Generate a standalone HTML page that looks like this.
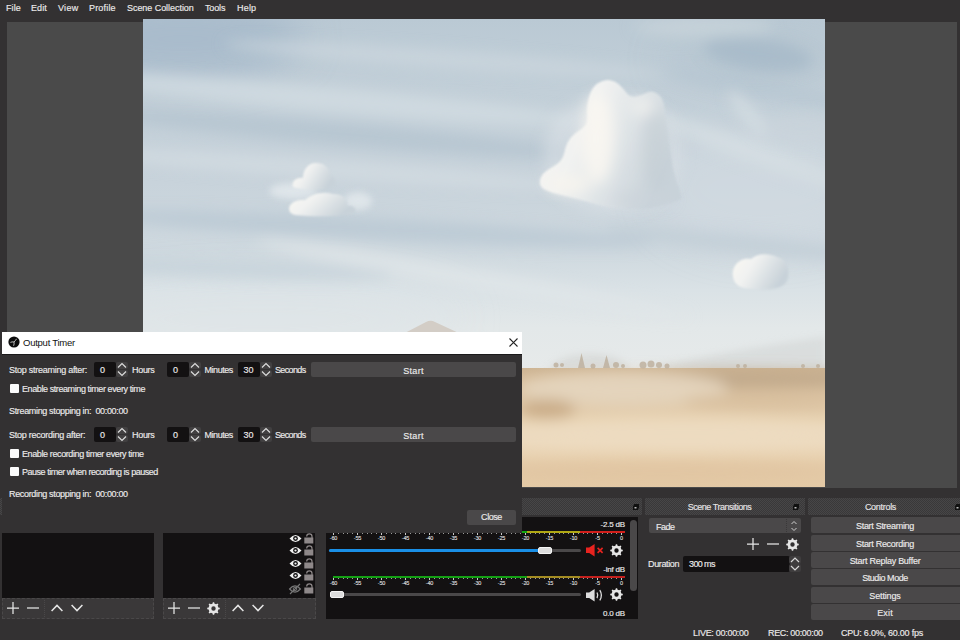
<!DOCTYPE html>
<html><head><meta charset="utf-8">
<style>
*{box-sizing:border-box}
html,body{margin:0;padding:0}
body{width:960px;height:640px;position:relative;overflow:hidden;background:#333132;font-family:"Liberation Sans",sans-serif;font-size:9px;color:#ecebeb;-webkit-text-stroke-width:0.15px}
.a{position:absolute;white-space:nowrap;line-height:10px}
.box{position:absolute}
svg{position:absolute;overflow:visible}
.menu span{position:absolute;top:3px;line-height:10px}
.sky{position:absolute;left:143px;top:19px;width:682px;height:468px;overflow:hidden;background:linear-gradient(180deg,#aabdcc 0%,#bac9d5 18%,#c8d4dc 38%,#d3dce2 55%,#dfe5e8 66%,#e6e9e9 74%,#e6e9e9 100%)}
.title{position:absolute;top:498px;height:17px;padding-top:1px;background:conic-gradient(#474647 25%,#393839 0 50%,#474647 0 75%,#393839 0) 0 0/2px 2px;text-align:center;line-height:17px;color:#e6e4e5}
.list{position:absolute;background:#131112}
.tb{position:absolute;background:#3a3839;border:1px dashed #4a4849}
.btn{position:absolute;background:#4a4849;border-radius:2px;text-align:center;line-height:16px}
.inp{position:absolute;background:#131112;border-radius:2px}
.cb{position:absolute;width:9px;height:9px;background:#fbfbfb;border-radius:1px}
.lbl{}
.tk{position:absolute;font-size:5.5px;line-height:6px;color:#dcdcdc;transform:translateX(-50%);letter-spacing:-0.2px}
</style></head><body>
<div class="menu">
<span style="letter-spacing:0.09px;left:6px">File</span>
<span style="letter-spacing:0.06px;left:31px">Edit</span>
<span style="letter-spacing:0.28px;left:58px">View</span>
<span style="letter-spacing:0.18px;left:89px">Profile</span>
<span style="letter-spacing:-0.05px;left:127px">Scene Collection</span>
<span style="letter-spacing:-0.13px;left:205px">Tools</span>
<span style="letter-spacing:0.19px;left:237px">Help</span>
</div>
<div class="box" style="left:7px;top:22px;width:950px;height:466px;background:#4a4a4a"></div>
<svg width="682" height="468" style="left:143px;top:19px;overflow:hidden" viewBox="0 0 682 468">
<defs>
<linearGradient id="sk" x1="0" y1="0" x2="0" y2="1">
<stop offset="0" stop-color="#bac9d4"/>
<stop offset="0.15" stop-color="#c2cfd8"/>
<stop offset="0.35" stop-color="#c8d3db"/>
<stop offset="0.5" stop-color="#cfd9df"/>
<stop offset="0.58" stop-color="#dae2e6"/>
<stop offset="0.66" stop-color="#e3e8e9"/>
<stop offset="0.76" stop-color="#e7eaea"/>
<stop offset="1" stop-color="#e7eaea"/>
</linearGradient>
<linearGradient id="cl" x1="0" y1="0" x2="1" y2="0.4">
<stop offset="0" stop-color="#f9f7f2"/>
<stop offset="0.4" stop-color="#f1f2f1"/>
<stop offset="1" stop-color="#c8d2d9"/>
</linearGradient>
<linearGradient id="land" x1="0" y1="0" x2="0" y2="1">
<stop offset="0" stop-color="#cdb493"/>
<stop offset="0.12" stop-color="#d6bd9c"/>
<stop offset="0.3" stop-color="#e0c9a9"/>
<stop offset="0.45" stop-color="#e6d0ae"/>
<stop offset="0.62" stop-color="#ecd9bc"/>
<stop offset="0.8" stop-color="#e7cfad"/>
<stop offset="1" stop-color="#e4caa6"/>
</linearGradient>
<filter id="b20" filterUnits="userSpaceOnUse" x="-200" y="-200" width="1100" height="900"><feGaussianBlur stdDeviation="18"/></filter>
<filter id="b8" filterUnits="userSpaceOnUse" x="-200" y="-200" width="1100" height="900"><feGaussianBlur stdDeviation="7"/></filter>
<filter id="b4" filterUnits="userSpaceOnUse" x="-200" y="-200" width="1100" height="900"><feGaussianBlur stdDeviation="3.5"/></filter>
<filter id="b15" filterUnits="userSpaceOnUse" x="-200" y="-200" width="1100" height="900"><feGaussianBlur stdDeviation="1.3"/></filter>
<filter id="b07" filterUnits="userSpaceOnUse" x="-200" y="-200" width="1100" height="900"><feGaussianBlur stdDeviation="0.7"/></filter>
</defs>
<rect width="682" height="468" fill="url(#sk)"/>
<!-- broad tone -->
<g filter="url(#b20)">
<ellipse cx="40" cy="20" rx="120" ry="40" fill="#a3b7c8" opacity=".75"/>
<ellipse cx="610" cy="40" rx="90" ry="22" fill="#b0c1ce" opacity=".5"/>
<ellipse cx="620" cy="170" rx="110" ry="60" fill="#d3dce2" opacity=".6"/>
<ellipse cx="120" cy="300" rx="200" ry="40" fill="#dde4e8" opacity=".6"/>
</g>
<!-- streaks -->
<g filter="url(#b8)">
<ellipse cx="180" cy="80" rx="280" ry="12" transform="rotate(5 180 80)" fill="#d2dce2" opacity=".8"/>
<ellipse cx="200" cy="115" rx="260" ry="11" transform="rotate(5 200 115)" fill="#b3c3cf" opacity=".75"/>
<ellipse cx="180" cy="150" rx="260" ry="9" transform="rotate(4 180 150)" fill="#d3dce2" opacity=".8"/>
<ellipse cx="230" cy="210" rx="280" ry="11" transform="rotate(3 230 210)" fill="#b6c6d1" opacity=".7"/>
<ellipse cx="600" cy="225" rx="140" ry="9" transform="rotate(6 600 225)" fill="#bccad4" opacity=".6"/>
<ellipse cx="600" cy="130" rx="120" ry="10" transform="rotate(20 600 130)" fill="#d6dee3" opacity=".8"/>
<ellipse cx="620" cy="70" rx="100" ry="9" transform="rotate(10 620 70)" fill="#b4c4d0" opacity=".6"/>
<ellipse cx="330" cy="260" rx="220" ry="10" transform="rotate(10 330 260)" fill="#e0e6e9" opacity=".8"/>
<ellipse cx="90" cy="250" rx="160" ry="9" transform="rotate(2 90 250)" fill="#c3d0d9" opacity=".7"/>
<ellipse cx="300" cy="40" rx="220" ry="9" transform="rotate(4 300 40)" fill="#cdd7de" opacity=".7"/>
</g>
<g filter="url(#b8)">
<ellipse cx="615" cy="35" rx="55" ry="16" transform="rotate(8 615 35)" fill="#a6b9c8" opacity=".8"/>
<ellipse cx="560" cy="8" rx="70" ry="10" fill="#cbd5dc" opacity=".7"/>
<ellipse cx="605" cy="95" rx="30" ry="7" transform="rotate(50 605 95)" fill="#d6dee3" opacity=".8"/>
<ellipse cx="660" cy="110" rx="40" ry="15" fill="#c9d3da" opacity=".6"/>
</g>
<!-- big cloud -->
<g filter="url(#b8)"><ellipse cx="470" cy="135" rx="70" ry="60" fill="#dfe5e8" opacity=".45"/></g>
<path filter="url(#b15)" fill="url(#cl)" d="M455.2 63.9 Q461.6 60.3 467.1 61.2 Q472.6 62.1 476.3 65.8 Q480.0 69.4 483.6 74.0 Q487.2 78.6 492.6 77.7 Q498.0 76.8 503.5 74.0 Q509.0 71.3 514.5 74.9 Q520.0 78.6 521.0 86.8 Q522.0 95.0 523.8 107.8 Q525.6 120.6 528.3 138.8 Q531.0 157.0 535.6 168.0 Q540.2 179.0 537.5 180.8 Q534.7 182.7 516.5 187.3 Q498.2 191.9 479.9 190.1 Q461.6 188.2 447.0 183.6 Q432.4 179.0 416.9 175.4 Q401.3 171.8 398.6 168.2 Q395.8 164.5 397.6 159.0 Q399.5 153.5 409.6 148.0 Q419.6 142.5 421.4 133.4 Q423.2 124.3 427.8 118.8 Q432.4 113.3 438.8 109.7 Q445.2 106.0 444.2 96.8 Q443.3 87.7 446.1 77.7 Q448.8 67.6 455.2 63.9Z"/>
<g filter="url(#b8)">
<ellipse cx="455" cy="120" rx="16" ry="45" fill="#fbf8f1" opacity=".8"/>
<ellipse cx="425" cy="165" rx="22" ry="9" fill="#f8f5ee" opacity=".8"/>
<ellipse cx="512" cy="130" rx="12" ry="42" fill="#c3ccd4" opacity=".55"/>
<ellipse cx="500" cy="180" rx="30" ry="8" fill="#ccd4da" opacity=".6"/>
<ellipse cx="500" cy="88" rx="12" ry="9" fill="#f6f5f1" opacity=".6"/>
</g>
<!-- left clouds -->
<g filter="url(#b4)" fill="#e2e8ec" opacity=".85">
<ellipse cx="150" cy="172" rx="24" ry="8"/>
<ellipse cx="215" cy="182" rx="14" ry="9"/>
</g>
<path filter="url(#b15)" fill="url(#cl)" d="M150 168 C148 162,154 158,160 159 C160 150,166 143,174 144 C182 144,188 150,187 157 C192 158,194 164,190 168 C184 172,160 172,150 168Z"/>
<path filter="url(#b15)" fill="url(#cl)" d="M146 190 C146 184,154 180,162 181 C168 175,180 172,190 175 C198 174,206 180,204 187 C210 186,214 190,212 194 C200 198,170 198,152 196 C148 195,146 193,146 190Z"/>
<!-- right small cloud -->
<path filter="url(#b15)" fill="url(#cl)" d="M590 258 C588 246,598 238,608 240 C614 234,626 234,634 238 C644 240,648 252,644 262 C640 270,624 272,610 270 C598 270,591 266,590 258Z"/>
<!-- mountain peak -->
<path d="M258 316 L283 303 Q287.6 300.5 292 303 L320 316 Z" fill="#d3cdc6" filter="url(#b07)"/>
<!-- far hills -->
<g filter="url(#b4)">
<ellipse cx="447" cy="352" rx="40" ry="17" fill="#d8dad9" opacity=".9"/>
<path d="M500 352 Q560 335 682 318 L682 352Z" fill="#d8dbdb" opacity=".9"/>
</g>
<!-- land -->
<rect x="0" y="349" width="682" height="119" fill="url(#land)"/>
<g filter="url(#b8)">
<ellipse cx="590" cy="360" rx="150" ry="9" fill="#bea789" opacity=".85"/>
<ellipse cx="480" cy="370" rx="105" ry="17" fill="#e5d5be" opacity=".95"/>
<ellipse cx="405" cy="390" rx="28" ry="10" fill="#c3a37c" opacity=".75"/>
<ellipse cx="620" cy="382" rx="80" ry="8" fill="#d5bc9a" opacity=".7"/>
<ellipse cx="540" cy="414" rx="200" ry="15" fill="#eddbc1" opacity=".9"/>
<ellipse cx="520" cy="452" rx="200" ry="10" fill="#dcc09b" opacity=".55"/>
</g>
<!-- trees -->
<g fill="#bcae9b" filter="url(#b07)" opacity=".8">
<path d="M435 349 L438.5 334 L442 349Z"/>
<path d="M460 349 L463.5 336 L467 349Z"/>
<circle cx="413" cy="346" r="2.5"/><circle cx="419" cy="346" r="2"/>
<circle cx="450" cy="347" r="2.5"/><circle cx="473" cy="346" r="3"/><circle cx="480" cy="347" r="2"/>
<circle cx="500" cy="346" r="3.5"/><circle cx="508" cy="345" r="3.5"/><circle cx="516" cy="346" r="3"/><circle cx="524" cy="347" r="2.5"/>
<circle cx="595" cy="347" r="2"/><circle cx="602" cy="347" r="2"/><circle cx="660" cy="347" r="2"/><circle cx="675" cy="347" r="2"/>
</g>
</svg>
<div class="title" style="left:0;width:155px;padding-right:11px">Scenes</div>
<div class="title" style="left:163px;width:154px;padding-right:11px">Sources</div>
<div class="title" style="left:325px;width:317px;padding-right:11px">Audio Mixer</div>
<div class="title" style="letter-spacing:-0.47px;left:645px;width:160px;padding-right:11px">Scene Transitions</div>
<div class="title" style="letter-spacing:-0.29px;left:808px;width:152px;padding-right:7px">Controls</div>
<svg width="6" height="6" style="left:633px;top:504px"><rect x="1.5" y="0.5" width="4" height="3.5" fill="#111" stroke="#111" stroke-width="1"/><rect x="0.5" y="2" width="4" height="3.5" fill="#111" stroke="#111"/><rect x="1.5" y="3" width="2" height="1.5" fill="#bbb"/></svg>
<svg width="6" height="6" style="left:793px;top:504px"><rect x="1.5" y="0.5" width="4" height="3.5" fill="#111" stroke="#111" stroke-width="1"/><rect x="0.5" y="2" width="4" height="3.5" fill="#111" stroke="#111"/><rect x="1.5" y="3" width="2" height="1.5" fill="#bbb"/></svg>
<svg width="6" height="6" style="left:955px;top:504px"><rect x="1.5" y="0.5" width="4" height="3.5" fill="#111" stroke="#111" stroke-width="1"/><rect x="0.5" y="2" width="4" height="3.5" fill="#111" stroke="#111"/><rect x="1.5" y="3" width="2" height="1.5" fill="#bbb"/></svg>
<div class="list" style="left:2px;top:517px;width:152px;height:81px"></div>
<div class="tb" style="left:2px;top:598px;width:152px;height:21px"></div>
<div class="list" style="left:163px;top:517px;width:152px;height:81px"></div>
<div class="tb" style="left:163px;top:598px;width:153px;height:21px"></div>
<div class="list" style="left:326px;top:517px;width:312px;height:102px"></div>
<svg width="12" height="12" style="left:7px;top:602px"><path d="M6 0V12M0 6H12" stroke="#e6e6e6" stroke-width="1.25"/></svg>
<svg width="12" height="12" style="left:27px;top:602px"><path d="M0 6H12" stroke="#e6e6e6" stroke-width="1.25"/></svg>
<svg width="12" height="8" style="left:51px;top:604px"><path d="M0.6 7L6 1.4L11.4 7" fill="none" stroke="#e6e6e6" stroke-width="1.5"/></svg>
<svg width="12" height="8" style="left:71px;top:604px"><path d="M0.6 1L6 6.6L11.4 1" fill="none" stroke="#e6e6e6" stroke-width="1.5"/></svg>
<div class="box" style="left:44px;top:600px;width:1px;height:17px;border-left:1px dotted #4a4849"></div>
<svg width="12" height="12" style="left:168px;top:602px"><path d="M6 0V12M0 6H12" stroke="#e6e6e6" stroke-width="1.25"/></svg>
<svg width="12" height="12" style="left:188px;top:602px"><path d="M0 6H12" stroke="#e6e6e6" stroke-width="1.25"/></svg>
<svg width="13" height="13" style="left:207.0px;top:601.5px"><path fill-rule="evenodd" fill="#e6e6e6" d="M4.62 1.97 L5.43 1.72 L5.86 0.23 L7.14 0.23 L7.57 1.72 L8.38 1.97 L9.13 2.36 L10.48 1.61 L11.39 2.52 L10.64 3.87 L11.03 4.62 L11.28 5.43 L12.77 5.86 L12.77 7.14 L11.28 7.57 L11.03 8.38 L10.64 9.13 L11.39 10.48 L10.48 11.39 L9.13 10.64 L8.38 11.03 L7.57 11.28 L7.14 12.77 L5.86 12.77 L5.43 11.28 L4.62 11.03 L3.87 10.64 L2.52 11.39 L1.61 10.48 L2.36 9.13 L1.97 8.38 L1.72 7.57 L0.23 7.14 L0.23 5.86 L1.72 5.43 L1.97 4.62 L2.36 3.87 L1.61 2.52 L2.52 1.61 L3.87 2.36Z M8.7 6.5 A2.2 2.2 0 1 0 4.3 6.5 A2.2 2.2 0 1 0 8.7 6.5Z"/></svg>
<svg width="12" height="8" style="left:232px;top:604px"><path d="M0.6 7L6 1.4L11.4 7" fill="none" stroke="#e6e6e6" stroke-width="1.5"/></svg>
<svg width="12" height="8" style="left:251.5px;top:604px"><path d="M0.6 1L6 6.6L11.4 1" fill="none" stroke="#e6e6e6" stroke-width="1.5"/></svg>
<div class="box" style="left:225px;top:600px;width:1px;height:17px;border-left:1px dotted #4a4849"></div>
<svg width="13" height="9" style="left:288.5px;top:533.5px"><path d="M0.5 4.5Q6.5 -2.6 12.5 4.5Q6.5 11.6 0.5 4.5Z" fill="#f2f2f2"/><circle cx="6.5" cy="4.5" r="2.4" fill="#121112"/><circle cx="6.5" cy="4.5" r="1.1" fill="#f2f2f2"/></svg>
<svg width="10" height="12" style="left:303.8px;top:532.5px"><path d="M2.7 3.6A2.65 2.65 0 0 1 8 3.6V5" fill="none" stroke="#8e8889" stroke-width="1.2"/><rect x="0.3" y="4.5" width="9" height="6" fill="#8e8889"/></svg>
<svg width="13" height="9" style="left:288.5px;top:546.0px"><path d="M0.5 4.5Q6.5 -2.6 12.5 4.5Q6.5 11.6 0.5 4.5Z" fill="#f2f2f2"/><circle cx="6.5" cy="4.5" r="2.4" fill="#121112"/><circle cx="6.5" cy="4.5" r="1.1" fill="#f2f2f2"/></svg>
<svg width="10" height="12" style="left:303.8px;top:545.0px"><path d="M2.7 3.6A2.65 2.65 0 0 1 8 3.6V5" fill="none" stroke="#8e8889" stroke-width="1.2"/><rect x="0.3" y="4.5" width="9" height="6" fill="#8e8889"/></svg>
<svg width="13" height="9" style="left:288.5px;top:558.5px"><path d="M0.5 4.5Q6.5 -2.6 12.5 4.5Q6.5 11.6 0.5 4.5Z" fill="#f2f2f2"/><circle cx="6.5" cy="4.5" r="2.4" fill="#121112"/><circle cx="6.5" cy="4.5" r="1.1" fill="#f2f2f2"/></svg>
<svg width="10" height="12" style="left:303.8px;top:557.5px"><path d="M2.7 3.6A2.65 2.65 0 0 1 8 3.6V5" fill="none" stroke="#8e8889" stroke-width="1.2"/><rect x="0.3" y="4.5" width="9" height="6" fill="#8e8889"/></svg>
<svg width="13" height="9" style="left:288.5px;top:571.2px"><path d="M0.5 4.5Q6.5 -2.6 12.5 4.5Q6.5 11.6 0.5 4.5Z" fill="#f2f2f2"/><circle cx="6.5" cy="4.5" r="2.4" fill="#121112"/><circle cx="6.5" cy="4.5" r="1.1" fill="#f2f2f2"/></svg>
<svg width="10" height="12" style="left:303.8px;top:570.2px"><path d="M2.7 3.6A2.65 2.65 0 0 1 8 3.6V5" fill="none" stroke="#8e8889" stroke-width="1.2"/><rect x="0.3" y="4.5" width="9" height="6" fill="#8e8889"/></svg>
<svg width="12" height="10" style="left:289px;top:583.5px"><path d="M0.6 5Q6 -1.2 11.4 5Q6 11.2 0.6 5Z" fill="none" stroke="#777" stroke-width="1.2"/><circle cx="6" cy="5" r="1.8" fill="none" stroke="#777" stroke-width="1"/><path d="M1 10L11 0" stroke="#777" stroke-width="1.1"/></svg>
<svg width="10" height="12" style="left:303.8px;top:583.0px"><path d="M2.7 3.6A2.65 2.65 0 0 1 8 3.6V5" fill="none" stroke="#8e8889" stroke-width="1.2"/><rect x="0.3" y="4.5" width="9" height="6" fill="#8e8889"/></svg>
<div class="box" style="left:333px;top:531px;width:292px;height:2px;background:linear-gradient(90deg,#12a812 0,#12a812 194px,#b0a814 194px,#b0a814 247px,#d21f1c 247px)"></div><div class="box" style="left:333.0px;top:533px;width:1px;height:2px;background:#c8c8c8"></div><div class="box" style="left:337.8px;top:533px;width:1px;height:1px;background:#9a9a9a"></div><div class="box" style="left:342.6px;top:533px;width:1px;height:1px;background:#9a9a9a"></div><div class="box" style="left:347.4px;top:533px;width:1px;height:1px;background:#9a9a9a"></div><div class="box" style="left:352.2px;top:533px;width:1px;height:1px;background:#9a9a9a"></div><div class="box" style="left:357.0px;top:533px;width:1px;height:2px;background:#c8c8c8"></div><div class="box" style="left:361.8px;top:533px;width:1px;height:1px;background:#9a9a9a"></div><div class="box" style="left:366.6px;top:533px;width:1px;height:1px;background:#9a9a9a"></div><div class="box" style="left:371.4px;top:533px;width:1px;height:1px;background:#9a9a9a"></div><div class="box" style="left:376.2px;top:533px;width:1px;height:1px;background:#9a9a9a"></div><div class="box" style="left:381.0px;top:533px;width:1px;height:2px;background:#c8c8c8"></div><div class="box" style="left:385.8px;top:533px;width:1px;height:1px;background:#9a9a9a"></div><div class="box" style="left:390.6px;top:533px;width:1px;height:1px;background:#9a9a9a"></div><div class="box" style="left:395.4px;top:533px;width:1px;height:1px;background:#9a9a9a"></div><div class="box" style="left:400.2px;top:533px;width:1px;height:1px;background:#9a9a9a"></div><div class="box" style="left:405.0px;top:533px;width:1px;height:2px;background:#c8c8c8"></div><div class="box" style="left:409.8px;top:533px;width:1px;height:1px;background:#9a9a9a"></div><div class="box" style="left:414.6px;top:533px;width:1px;height:1px;background:#9a9a9a"></div><div class="box" style="left:419.4px;top:533px;width:1px;height:1px;background:#9a9a9a"></div><div class="box" style="left:424.2px;top:533px;width:1px;height:1px;background:#9a9a9a"></div><div class="box" style="left:429.0px;top:533px;width:1px;height:2px;background:#c8c8c8"></div><div class="box" style="left:433.8px;top:533px;width:1px;height:1px;background:#9a9a9a"></div><div class="box" style="left:438.6px;top:533px;width:1px;height:1px;background:#9a9a9a"></div><div class="box" style="left:443.4px;top:533px;width:1px;height:1px;background:#9a9a9a"></div><div class="box" style="left:448.2px;top:533px;width:1px;height:1px;background:#9a9a9a"></div><div class="box" style="left:453.0px;top:533px;width:1px;height:2px;background:#c8c8c8"></div><div class="box" style="left:457.8px;top:533px;width:1px;height:1px;background:#9a9a9a"></div><div class="box" style="left:462.6px;top:533px;width:1px;height:1px;background:#9a9a9a"></div><div class="box" style="left:467.4px;top:533px;width:1px;height:1px;background:#9a9a9a"></div><div class="box" style="left:472.2px;top:533px;width:1px;height:1px;background:#9a9a9a"></div><div class="box" style="left:477.0px;top:533px;width:1px;height:2px;background:#c8c8c8"></div><div class="box" style="left:481.8px;top:533px;width:1px;height:1px;background:#9a9a9a"></div><div class="box" style="left:486.6px;top:533px;width:1px;height:1px;background:#9a9a9a"></div><div class="box" style="left:491.4px;top:533px;width:1px;height:1px;background:#9a9a9a"></div><div class="box" style="left:496.2px;top:533px;width:1px;height:1px;background:#9a9a9a"></div><div class="box" style="left:501.0px;top:533px;width:1px;height:2px;background:#c8c8c8"></div><div class="box" style="left:505.8px;top:533px;width:1px;height:1px;background:#9a9a9a"></div><div class="box" style="left:510.6px;top:533px;width:1px;height:1px;background:#9a9a9a"></div><div class="box" style="left:515.4px;top:533px;width:1px;height:1px;background:#9a9a9a"></div><div class="box" style="left:520.2px;top:533px;width:1px;height:1px;background:#9a9a9a"></div><div class="box" style="left:525.0px;top:533px;width:1px;height:2px;background:#c8c8c8"></div><div class="box" style="left:529.8px;top:533px;width:1px;height:1px;background:#9a9a9a"></div><div class="box" style="left:534.6px;top:533px;width:1px;height:1px;background:#9a9a9a"></div><div class="box" style="left:539.4px;top:533px;width:1px;height:1px;background:#9a9a9a"></div><div class="box" style="left:544.2px;top:533px;width:1px;height:1px;background:#9a9a9a"></div><div class="box" style="left:549.0px;top:533px;width:1px;height:2px;background:#c8c8c8"></div><div class="box" style="left:553.8px;top:533px;width:1px;height:1px;background:#9a9a9a"></div><div class="box" style="left:558.6px;top:533px;width:1px;height:1px;background:#9a9a9a"></div><div class="box" style="left:563.4px;top:533px;width:1px;height:1px;background:#9a9a9a"></div><div class="box" style="left:568.2px;top:533px;width:1px;height:1px;background:#9a9a9a"></div><div class="box" style="left:573.0px;top:533px;width:1px;height:2px;background:#c8c8c8"></div><div class="box" style="left:577.8px;top:533px;width:1px;height:1px;background:#9a9a9a"></div><div class="box" style="left:582.6px;top:533px;width:1px;height:1px;background:#9a9a9a"></div><div class="box" style="left:587.4px;top:533px;width:1px;height:1px;background:#9a9a9a"></div><div class="box" style="left:592.2px;top:533px;width:1px;height:1px;background:#9a9a9a"></div><div class="box" style="left:597.0px;top:533px;width:1px;height:2px;background:#c8c8c8"></div><div class="box" style="left:601.8px;top:533px;width:1px;height:1px;background:#9a9a9a"></div><div class="box" style="left:606.6px;top:533px;width:1px;height:1px;background:#9a9a9a"></div><div class="box" style="left:611.4px;top:533px;width:1px;height:1px;background:#9a9a9a"></div><div class="box" style="left:616.2px;top:533px;width:1px;height:1px;background:#9a9a9a"></div><div class="box" style="left:621.0px;top:533px;width:1px;height:2px;background:#c8c8c8"></div><div class="tk" style="left:333.5px;top:535px">-60</div><div class="tk" style="left:357.5px;top:535px">-55</div><div class="tk" style="left:381.5px;top:535px">-50</div><div class="tk" style="left:405.5px;top:535px">-45</div><div class="tk" style="left:429.5px;top:535px">-40</div><div class="tk" style="left:453.5px;top:535px">-35</div><div class="tk" style="left:477.5px;top:535px">-30</div><div class="tk" style="left:501.5px;top:535px">-25</div><div class="tk" style="left:525.5px;top:535px">-20</div><div class="tk" style="left:549.5px;top:535px">-15</div><div class="tk" style="left:573.5px;top:535px">-10</div><div class="tk" style="left:597.5px;top:535px">-5</div><div class="tk" style="left:621.5px;top:535px">0</div>
<div class="box" style="left:333px;top:576px;width:292px;height:2px;background:linear-gradient(90deg,#14a014 0,#14a014 194px,#a48c22 194px,#a48c22 247px,#c4201d 247px)"></div><div class="box" style="left:333.0px;top:578px;width:1px;height:2px;background:#c8c8c8"></div><div class="box" style="left:337.8px;top:578px;width:1px;height:1px;background:#9a9a9a"></div><div class="box" style="left:342.6px;top:578px;width:1px;height:1px;background:#9a9a9a"></div><div class="box" style="left:347.4px;top:578px;width:1px;height:1px;background:#9a9a9a"></div><div class="box" style="left:352.2px;top:578px;width:1px;height:1px;background:#9a9a9a"></div><div class="box" style="left:357.0px;top:578px;width:1px;height:2px;background:#c8c8c8"></div><div class="box" style="left:361.8px;top:578px;width:1px;height:1px;background:#9a9a9a"></div><div class="box" style="left:366.6px;top:578px;width:1px;height:1px;background:#9a9a9a"></div><div class="box" style="left:371.4px;top:578px;width:1px;height:1px;background:#9a9a9a"></div><div class="box" style="left:376.2px;top:578px;width:1px;height:1px;background:#9a9a9a"></div><div class="box" style="left:381.0px;top:578px;width:1px;height:2px;background:#c8c8c8"></div><div class="box" style="left:385.8px;top:578px;width:1px;height:1px;background:#9a9a9a"></div><div class="box" style="left:390.6px;top:578px;width:1px;height:1px;background:#9a9a9a"></div><div class="box" style="left:395.4px;top:578px;width:1px;height:1px;background:#9a9a9a"></div><div class="box" style="left:400.2px;top:578px;width:1px;height:1px;background:#9a9a9a"></div><div class="box" style="left:405.0px;top:578px;width:1px;height:2px;background:#c8c8c8"></div><div class="box" style="left:409.8px;top:578px;width:1px;height:1px;background:#9a9a9a"></div><div class="box" style="left:414.6px;top:578px;width:1px;height:1px;background:#9a9a9a"></div><div class="box" style="left:419.4px;top:578px;width:1px;height:1px;background:#9a9a9a"></div><div class="box" style="left:424.2px;top:578px;width:1px;height:1px;background:#9a9a9a"></div><div class="box" style="left:429.0px;top:578px;width:1px;height:2px;background:#c8c8c8"></div><div class="box" style="left:433.8px;top:578px;width:1px;height:1px;background:#9a9a9a"></div><div class="box" style="left:438.6px;top:578px;width:1px;height:1px;background:#9a9a9a"></div><div class="box" style="left:443.4px;top:578px;width:1px;height:1px;background:#9a9a9a"></div><div class="box" style="left:448.2px;top:578px;width:1px;height:1px;background:#9a9a9a"></div><div class="box" style="left:453.0px;top:578px;width:1px;height:2px;background:#c8c8c8"></div><div class="box" style="left:457.8px;top:578px;width:1px;height:1px;background:#9a9a9a"></div><div class="box" style="left:462.6px;top:578px;width:1px;height:1px;background:#9a9a9a"></div><div class="box" style="left:467.4px;top:578px;width:1px;height:1px;background:#9a9a9a"></div><div class="box" style="left:472.2px;top:578px;width:1px;height:1px;background:#9a9a9a"></div><div class="box" style="left:477.0px;top:578px;width:1px;height:2px;background:#c8c8c8"></div><div class="box" style="left:481.8px;top:578px;width:1px;height:1px;background:#9a9a9a"></div><div class="box" style="left:486.6px;top:578px;width:1px;height:1px;background:#9a9a9a"></div><div class="box" style="left:491.4px;top:578px;width:1px;height:1px;background:#9a9a9a"></div><div class="box" style="left:496.2px;top:578px;width:1px;height:1px;background:#9a9a9a"></div><div class="box" style="left:501.0px;top:578px;width:1px;height:2px;background:#c8c8c8"></div><div class="box" style="left:505.8px;top:578px;width:1px;height:1px;background:#9a9a9a"></div><div class="box" style="left:510.6px;top:578px;width:1px;height:1px;background:#9a9a9a"></div><div class="box" style="left:515.4px;top:578px;width:1px;height:1px;background:#9a9a9a"></div><div class="box" style="left:520.2px;top:578px;width:1px;height:1px;background:#9a9a9a"></div><div class="box" style="left:525.0px;top:578px;width:1px;height:2px;background:#c8c8c8"></div><div class="box" style="left:529.8px;top:578px;width:1px;height:1px;background:#9a9a9a"></div><div class="box" style="left:534.6px;top:578px;width:1px;height:1px;background:#9a9a9a"></div><div class="box" style="left:539.4px;top:578px;width:1px;height:1px;background:#9a9a9a"></div><div class="box" style="left:544.2px;top:578px;width:1px;height:1px;background:#9a9a9a"></div><div class="box" style="left:549.0px;top:578px;width:1px;height:2px;background:#c8c8c8"></div><div class="box" style="left:553.8px;top:578px;width:1px;height:1px;background:#9a9a9a"></div><div class="box" style="left:558.6px;top:578px;width:1px;height:1px;background:#9a9a9a"></div><div class="box" style="left:563.4px;top:578px;width:1px;height:1px;background:#9a9a9a"></div><div class="box" style="left:568.2px;top:578px;width:1px;height:1px;background:#9a9a9a"></div><div class="box" style="left:573.0px;top:578px;width:1px;height:2px;background:#c8c8c8"></div><div class="box" style="left:577.8px;top:578px;width:1px;height:1px;background:#9a9a9a"></div><div class="box" style="left:582.6px;top:578px;width:1px;height:1px;background:#9a9a9a"></div><div class="box" style="left:587.4px;top:578px;width:1px;height:1px;background:#9a9a9a"></div><div class="box" style="left:592.2px;top:578px;width:1px;height:1px;background:#9a9a9a"></div><div class="box" style="left:597.0px;top:578px;width:1px;height:2px;background:#c8c8c8"></div><div class="box" style="left:601.8px;top:578px;width:1px;height:1px;background:#9a9a9a"></div><div class="box" style="left:606.6px;top:578px;width:1px;height:1px;background:#9a9a9a"></div><div class="box" style="left:611.4px;top:578px;width:1px;height:1px;background:#9a9a9a"></div><div class="box" style="left:616.2px;top:578px;width:1px;height:1px;background:#9a9a9a"></div><div class="box" style="left:621.0px;top:578px;width:1px;height:2px;background:#c8c8c8"></div><div class="tk" style="left:333.5px;top:580px">-60</div><div class="tk" style="left:357.5px;top:580px">-55</div><div class="tk" style="left:381.5px;top:580px">-50</div><div class="tk" style="left:405.5px;top:580px">-45</div><div class="tk" style="left:429.5px;top:580px">-40</div><div class="tk" style="left:453.5px;top:580px">-35</div><div class="tk" style="left:477.5px;top:580px">-30</div><div class="tk" style="left:501.5px;top:580px">-25</div><div class="tk" style="left:525.5px;top:580px">-20</div><div class="tk" style="left:549.5px;top:580px">-15</div><div class="tk" style="left:573.5px;top:580px">-10</div><div class="tk" style="left:597.5px;top:580px">-5</div><div class="tk" style="left:621.5px;top:580px">0</div>
<div class="a" style="left:585px;top:520px;width:40px;text-align:right;font-size:8px;letter-spacing:-0.2px">-2.5 dB</div>
<div class="a" style="left:585px;top:565px;width:40px;text-align:right;font-size:8px;letter-spacing:-0.2px">-inf dB</div>
<div class="a" style="left:585px;top:609px;width:40px;text-align:right;font-size:8px;letter-spacing:-0.2px">0.0 dB</div>
<div class="box" style="left:329px;top:549px;width:252px;height:3px;border-radius:2px;background:#4a4849"></div>
<div class="box" style="left:329px;top:549px;width:212px;height:3px;border-radius:2px;background:#1a8fe6"></div>
<div class="box" style="left:538px;top:547px;width:14px;height:7px;border-radius:2px;background:#dcdcdc;border:1px solid #f4f4f4"></div>
<div class="box" style="left:333px;top:593px;width:248px;height:3px;border-radius:2px;background:#4a4849"></div>
<div class="box" style="left:330px;top:591px;width:14px;height:7px;border-radius:2px;background:#dcdcdc;border:1px solid #f4f4f4"></div>
<svg width="19" height="13" style="left:586px;top:544px"><path d="M0 3.6H3.2L8.6 0V12.6L3.2 9H0Z" fill="#e8231f"/><path d="M11.6 3.9L16.6 8.9M16.6 3.9L11.6 8.9" stroke="#e8231f" stroke-width="1.6"/></svg>
<svg width="13" height="13" style="left:609.8px;top:544.0px"><path fill-rule="evenodd" fill="#e6e6e6" d="M4.62 1.97 L5.43 1.72 L5.86 0.23 L7.14 0.23 L7.57 1.72 L8.38 1.97 L9.13 2.36 L10.48 1.61 L11.39 2.52 L10.64 3.87 L11.03 4.62 L11.28 5.43 L12.77 5.86 L12.77 7.14 L11.28 7.57 L11.03 8.38 L10.64 9.13 L11.39 10.48 L10.48 11.39 L9.13 10.64 L8.38 11.03 L7.57 11.28 L7.14 12.77 L5.86 12.77 L5.43 11.28 L4.62 11.03 L3.87 10.64 L2.52 11.39 L1.61 10.48 L2.36 9.13 L1.97 8.38 L1.72 7.57 L0.23 7.14 L0.23 5.86 L1.72 5.43 L1.97 4.62 L2.36 3.87 L1.61 2.52 L2.52 1.61 L3.87 2.36Z M8.7 6.5 A2.2 2.2 0 1 0 4.3 6.5 A2.2 2.2 0 1 0 8.7 6.5Z"/></svg>
<svg width="19" height="13" style="left:586px;top:589px"><path d="M0 3.6H3.2L8.6 0V12.6L3.2 9H0Z" fill="#dcdcdc"/><path d="M11 3.5Q12.6 6.3 11 9.1" fill="none" stroke="#dcdcdc" stroke-width="1.3"/><path d="M13.8 1.2Q17 6.3 13.8 11.4" fill="none" stroke="#dcdcdc" stroke-width="1.3"/></svg>
<svg width="13" height="13" style="left:609.8px;top:588.0px"><path fill-rule="evenodd" fill="#e6e6e6" d="M4.62 1.97 L5.43 1.72 L5.86 0.23 L7.14 0.23 L7.57 1.72 L8.38 1.97 L9.13 2.36 L10.48 1.61 L11.39 2.52 L10.64 3.87 L11.03 4.62 L11.28 5.43 L12.77 5.86 L12.77 7.14 L11.28 7.57 L11.03 8.38 L10.64 9.13 L11.39 10.48 L10.48 11.39 L9.13 10.64 L8.38 11.03 L7.57 11.28 L7.14 12.77 L5.86 12.77 L5.43 11.28 L4.62 11.03 L3.87 10.64 L2.52 11.39 L1.61 10.48 L2.36 9.13 L1.97 8.38 L1.72 7.57 L0.23 7.14 L0.23 5.86 L1.72 5.43 L1.97 4.62 L2.36 3.87 L1.61 2.52 L2.52 1.61 L3.87 2.36Z M8.7 6.5 A2.2 2.2 0 1 0 4.3 6.5 A2.2 2.2 0 1 0 8.7 6.5Z"/></svg>
<div class="box" style="left:630px;top:520px;width:7px;height:71px;border-radius:4px;background:#4a4849"></div>
<div class="btn" style="letter-spacing:-0.47px;left:649px;top:518px;width:152px;height:15px;line-height:16px;text-align:left;padding-left:7px;padding-top:1px">Fade</div>
<div class="box" style="left:786px;top:519px;width:1px;height:13px;border-left:1px dotted #3a3839"></div>
<svg width="8" height="12" style="left:790px;top:519.5px"><path d="M1.5 4L4 1.5L6.5 4M1.5 8L4 10.5L6.5 8" fill="none" stroke="#cfcfcf" stroke-width="1"/></svg>
<svg width="12" height="12" style="left:747px;top:538px"><path d="M6 0V12M0 6H12" stroke="#e6e6e6" stroke-width="1.25"/></svg>
<svg width="12" height="12" style="left:767px;top:538px"><path d="M0 6H12" stroke="#e6e6e6" stroke-width="1.25"/></svg>
<svg width="13" height="13" style="left:786.0px;top:537.5px"><path fill-rule="evenodd" fill="#e6e6e6" d="M4.62 1.97 L5.43 1.72 L5.86 0.23 L7.14 0.23 L7.57 1.72 L8.38 1.97 L9.13 2.36 L10.48 1.61 L11.39 2.52 L10.64 3.87 L11.03 4.62 L11.28 5.43 L12.77 5.86 L12.77 7.14 L11.28 7.57 L11.03 8.38 L10.64 9.13 L11.39 10.48 L10.48 11.39 L9.13 10.64 L8.38 11.03 L7.57 11.28 L7.14 12.77 L5.86 12.77 L5.43 11.28 L4.62 11.03 L3.87 10.64 L2.52 11.39 L1.61 10.48 L2.36 9.13 L1.97 8.38 L1.72 7.57 L0.23 7.14 L0.23 5.86 L1.72 5.43 L1.97 4.62 L2.36 3.87 L1.61 2.52 L2.52 1.61 L3.87 2.36Z M8.7 6.5 A2.2 2.2 0 1 0 4.3 6.5 A2.2 2.2 0 1 0 8.7 6.5Z"/></svg>
<div class="a lbl" style="letter-spacing:-0.36px;left:648px;top:559px">Duration</div>
<div class="inp" style="left:683px;top:556px;width:107px;height:16px"></div>
<div class="a lbl" style="letter-spacing:-0.6px;left:689px;top:559px">300 ms</div>
<div class="box" style="left:789px;top:556px;width:12px;height:8px;border-radius:2px;background:#3f3d3e"></div>
<div class="box" style="left:789px;top:564px;width:12px;height:8px;border-radius:2px;background:#3f3d3e"></div>
<svg width="12" height="16" style="left:789px;top:556px"><path d="M2 6L6 2L10 6M2 10L6 14L10 10" fill="none" stroke="#d8d8d8" stroke-width="1.2"/></svg>
<div class="btn" style="letter-spacing:-0.3px;left:811px;top:517px;width:152px;height:16px;padding-right:4px;padding-top:1px;">Start Streaming</div>
<div class="btn" style="letter-spacing:-0.3px;left:811px;top:535px;width:152px;height:16px;padding-right:4px;padding-top:1px;">Start Recording</div>
<div class="btn" style="letter-spacing:-0.27px;left:811px;top:552px;width:152px;height:16px;padding-right:4px;padding-top:1px;">Start Replay Buffer</div>
<div class="btn" style="letter-spacing:-0.44px;left:811px;top:569px;width:152px;height:16px;padding-right:4px;padding-top:1px;">Studio Mode</div>
<div class="btn" style="letter-spacing:-0.15px;left:811px;top:587px;width:152px;height:16px;padding-right:4px;padding-top:1px;">Settings</div>
<div class="btn" style="letter-spacing:0.16px;left:811px;top:604px;width:152px;height:16px;padding-right:4px;padding-top:1px;">Exit</div>
<div class="a lbl" style="letter-spacing:-0.29px;left:693px;top:628px">LIVE: 00:00:00</div>
<div class="a lbl" style="letter-spacing:-0.33px;left:768px;top:628px">REC: 00:00:00</div>
<div class="a lbl" style="letter-spacing:-0.23px;left:841px;top:628px">CPU: 6.0%, 60.00 fps</div>
<div class="box" style="left:2px;top:332px;width:520px;height:201px;background:#333132"></div>
<div class="box" style="left:2px;top:332px;width:520px;height:22px;background:#ffffff"></div>
<div class="box" style="left:2px;top:354px;width:520px;height:1px;background:#1b1a1b"></div>
<svg width="12" height="12" style="left:7.5px;top:335.5px"><circle cx="6" cy="6" r="5.6" fill="#0c0c0c"/><path d="M6 6Q7.6 4.4 8.6 2.8M6 6Q4 5.6 2.4 6.4M6 6Q6.4 8 5.6 9.8" fill="none" stroke="#cfcfcf" stroke-width="0.9"/></svg>
<div class="a" style="left:23px;top:338px;font-size:9.5px;color:#111;letter-spacing:-0.25px;-webkit-text-stroke-width:0">Output Timer</div>
<svg width="9" height="9" style="left:508.5px;top:337.5px"><path d="M0.5 0.5L8.5 8.5M8.5 0.5L0.5 8.5" stroke="#222" stroke-width="1.1"/></svg>
<div class="a lbl" style="letter-spacing:-0.26px;left:9px;top:365px">Stop streaming after:</div>
<div class="inp" style="left:94px;top:362px;width:22px;height:15px"></div><div class="a" style="left:100px;top:365px">0</div><div class="box" style="left:116px;top:362px;width:12px;height:7px;border-radius:2px;background:#424041"></div><div class="box" style="left:116px;top:370px;width:12px;height:7px;border-radius:2px;background:#424041"></div><svg width="12" height="15" style="left:116px;top:362px"><path d="M2 5.5L6 1.6L10 5.5M2 9.5L6 13.4L10 9.5" fill="none" stroke="#dcdcdc" stroke-width="1.2"/></svg>
<div class="a lbl" style="letter-spacing:-0.3px;left:132px;top:365px">Hours</div>
<div class="inp" style="left:167px;top:362px;width:22px;height:15px"></div><div class="a" style="left:173px;top:365px">0</div><div class="box" style="left:189px;top:362px;width:12px;height:7px;border-radius:2px;background:#424041"></div><div class="box" style="left:189px;top:370px;width:12px;height:7px;border-radius:2px;background:#424041"></div><svg width="12" height="15" style="left:189px;top:362px"><path d="M2 5.5L6 1.6L10 5.5M2 9.5L6 13.4L10 9.5" fill="none" stroke="#dcdcdc" stroke-width="1.2"/></svg>
<div class="a lbl" style="letter-spacing:-0.44px;left:204.5px;top:365px">Minutes</div>
<div class="inp" style="left:238px;top:362px;width:22px;height:15px"></div><div class="a" style="left:243.5px;top:365px">30</div><div class="box" style="left:260px;top:362px;width:12px;height:7px;border-radius:2px;background:#424041"></div><div class="box" style="left:260px;top:370px;width:12px;height:7px;border-radius:2px;background:#424041"></div><svg width="12" height="15" style="left:260px;top:362px"><path d="M2 5.5L6 1.6L10 5.5M2 9.5L6 13.4L10 9.5" fill="none" stroke="#dcdcdc" stroke-width="1.2"/></svg>
<div class="a lbl" style="letter-spacing:-0.64px;left:275px;top:365px">Seconds</div>
<div class="btn" style="letter-spacing:0.27px;left:311px;top:362px;width:205px;height:15px;line-height:16px;padding-top:1px">Start</div>
<div class="a lbl" style="letter-spacing:-0.25px;left:9px;top:430px">Stop recording after:</div>
<div class="inp" style="left:94px;top:427px;width:22px;height:15px"></div><div class="a" style="left:100px;top:430px">0</div><div class="box" style="left:116px;top:427px;width:12px;height:7px;border-radius:2px;background:#424041"></div><div class="box" style="left:116px;top:435px;width:12px;height:7px;border-radius:2px;background:#424041"></div><svg width="12" height="15" style="left:116px;top:427px"><path d="M2 5.5L6 1.6L10 5.5M2 9.5L6 13.4L10 9.5" fill="none" stroke="#dcdcdc" stroke-width="1.2"/></svg>
<div class="a lbl" style="letter-spacing:-0.3px;left:132px;top:430px">Hours</div>
<div class="inp" style="left:167px;top:427px;width:22px;height:15px"></div><div class="a" style="left:173px;top:430px">0</div><div class="box" style="left:189px;top:427px;width:12px;height:7px;border-radius:2px;background:#424041"></div><div class="box" style="left:189px;top:435px;width:12px;height:7px;border-radius:2px;background:#424041"></div><svg width="12" height="15" style="left:189px;top:427px"><path d="M2 5.5L6 1.6L10 5.5M2 9.5L6 13.4L10 9.5" fill="none" stroke="#dcdcdc" stroke-width="1.2"/></svg>
<div class="a lbl" style="letter-spacing:-0.44px;left:204.5px;top:430px">Minutes</div>
<div class="inp" style="left:238px;top:427px;width:22px;height:15px"></div><div class="a" style="left:243.5px;top:430px">30</div><div class="box" style="left:260px;top:427px;width:12px;height:7px;border-radius:2px;background:#424041"></div><div class="box" style="left:260px;top:435px;width:12px;height:7px;border-radius:2px;background:#424041"></div><svg width="12" height="15" style="left:260px;top:427px"><path d="M2 5.5L6 1.6L10 5.5M2 9.5L6 13.4L10 9.5" fill="none" stroke="#dcdcdc" stroke-width="1.2"/></svg>
<div class="a lbl" style="letter-spacing:-0.64px;left:275px;top:430px">Seconds</div>
<div class="btn" style="letter-spacing:0.27px;left:311px;top:427px;width:205px;height:15px;line-height:16px;padding-top:1px">Start</div>
<div class="cb" style="left:10px;top:384px"></div>
<div class="a lbl" style="letter-spacing:-0.41px;left:22px;top:384px">Enable streaming timer every time</div>
<div class="cb" style="left:10px;top:449px"></div>
<div class="a lbl" style="letter-spacing:-0.39px;left:22px;top:449px">Enable recording timer every time</div>
<div class="cb" style="left:10px;top:466.5px"></div>
<div class="a lbl" style="letter-spacing:-0.48px;left:22px;top:466.5px">Pause timer when recording is paused</div>
<div class="a lbl" style="letter-spacing:-0.34px;left:9px;top:406px">Streaming stopping in:&nbsp; 00:00:00</div>
<div class="a lbl" style="letter-spacing:-0.34px;left:9px;top:488.5px">Recording stopping in:&nbsp; 00:00:00</div>
<div class="btn" style="letter-spacing:-0.45px;left:467px;top:510px;width:49px;height:15px;line-height:15px">Close</div>
</body></html>
